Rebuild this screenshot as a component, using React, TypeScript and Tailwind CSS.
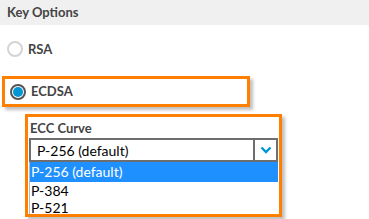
import React from 'react';

const options = ['P-256 (default)', 'P-384', 'P-521'];

function Radio({ checked }: { checked?: boolean }) {
  if (checked) {
    return (
      <span className="flex h-[16px] w-[16px] items-center justify-center rounded-full border-2 border-[#555]">
        <span className="h-[10px] w-[10px] rounded-full bg-[#0096d6]" />
      </span>
    );
  }
  return <span className="h-[16px] w-[16px] rounded-full border-2 border-[#d4d4d4]" />;
}

export default function App() {
  return (
    <div className="h-[219px] w-[369px] overflow-hidden bg-white font-['Lato',sans-serif] text-[#444]">
      <div className="flex h-[25px] items-center bg-[#f0f0f0] pl-[7px] text-[13px] font-bold">Key Options</div>

      <div className="mt-[16px] flex h-[16px] items-center gap-[5px] pl-[7px] leading-none">
        <Radio />
        <span className="text-[13px] font-bold">RSA</span>
      </div>

      <div className="ml-[2px] mt-[19px] flex h-[31px] w-[248px] items-center gap-[5px] border-[3px] border-[#ff8000] pl-[5px] shadow-[3px_3px_3px_rgba(0,0,0,0.25)]">
        <Radio checked />
        <span className="text-[13px] font-bold">ECDSA</span>
      </div>

      <div className="ml-[25px] mt-[7px] h-[103px] w-[257px] overflow-hidden border-[3px] border-[#ff8000] px-[1px] shadow-[3px_3px_3px_rgba(0,0,0,0.25)]">
        <div className="pl-[1px] pt-[3px] text-[13px] font-bold leading-[16px]">ECC Curve</div>
        <div className="mt-[2px] flex h-[24px] border-2 border-[#6e6e6e] text-[14px] text-black">
          <div className="flex flex-1 items-center pl-[6px]">P-256 (default)</div>
          <div className="flex w-[23px] items-center justify-center border-l-2 border-[#6e6e6e]">
            <svg width="12" height="8" viewBox="0 0 12 8">
              <path d="M1.5 1.5 6 6l4.5-4.5" fill="none" stroke="#0096d6" strokeWidth="2.4" />
            </svg>
          </div>
        </div>
        <div className="border-l border-[#bbb] text-[14px] text-black">
          {options.map((o, i) => (
            <div
              key={o}
              className={i === 0 ? 'bg-[#1e90ff] pl-[1px] leading-[20px] text-white' : 'pl-[1px] leading-[17px]'}
            >
              {o}
            </div>
          ))}
        </div>
      </div>
    </div>
  );
}
